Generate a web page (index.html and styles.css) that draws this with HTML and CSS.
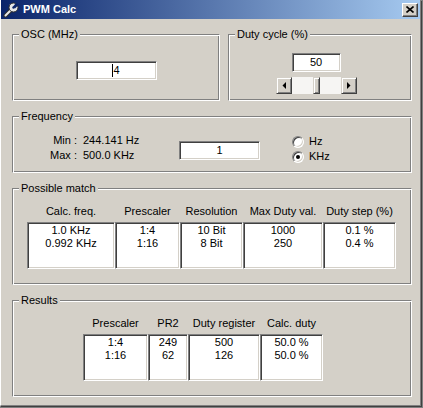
FILE: index.html
```html
<!DOCTYPE html>
<html>
<head>
<meta charset="utf-8">
<title>PWM Calc</title>
<link rel="stylesheet" href="styles.css">
</head>
<body>
<div class="window">
  <div class="titlebar">
    <svg class="app-icon" viewBox="0 0 16 16" width="16" height="16">
      <line x1="8.5" y1="7.5" x2="2.5" y2="13.5" stroke="#303030" stroke-width="4" stroke-linecap="round"/>
      <line x1="8.5" y1="7.5" x2="2.5" y2="13.5" stroke="#e8e8e8" stroke-width="2" stroke-linecap="round"/>
      <circle cx="10.5" cy="5.5" r="4.5" fill="#e8e8e8" stroke="#303030" stroke-width="1"/>
      <polygon points="10,4.5 13,1 16,2.5 12,6.5" fill="#0a246a"/>
      <circle cx="10.5" cy="5.5" r="1.2" fill="#0a246a"/>
    </svg>
    <span class="title">PWM Calc</span>
    <div class="close-btn">
      <svg viewBox="0 0 8 7" width="8" height="7">
        <path d="M0.5 0.5 L7.5 6.5 M7.5 0.5 L0.5 6.5" stroke="#000" stroke-width="1.6" fill="none"/>
      </svg>
    </div>
  </div>
  <div class="content">
    <div class="row">
      <div class="group group-osc">
        <span class="legend">OSC (MHz)</span>
        <div class="edit edit-osc"><span class="caret"></span>4</div>
      </div>
      <div class="group group-duty">
        <span class="legend">Duty cycle (%)</span>
        <div class="edit edit-duty">50</div>
        <div class="hscroll">
          <div class="raised sb-btn">
            <svg viewBox="0 0 4 7" width="4" height="7"><polygon points="4,0 4,7 0.5,3.5" fill="#000"/></svg>
          </div>
          <div class="sb-track"><div class="raised sb-thumb"></div></div>
          <div class="raised sb-btn">
            <svg viewBox="0 0 4 7" width="4" height="7"><polygon points="0,0 0,7 3.5,3.5" fill="#000"/></svg>
          </div>
        </div>
      </div>
    </div>

    <div class="group group-freq">
      <span class="legend">Frequency</span>
      <div class="freq-range">
        <span class="range-label">Min :</span><span>244.141 Hz</span>
        <span class="range-label">Max :</span><span>500.0 KHz</span>
      </div>
      <div class="edit edit-freq">1</div>
      <div class="units">
        <div class="radio-row"><span class="radio"></span><span>Hz</span></div>
        <div class="radio-row"><span class="radio checked"></span><span>KHz</span></div>
      </div>
    </div>

    <div class="group group-match">
      <span class="legend">Possible match</span>
      <div class="table table-match">
        <div class="th">Calc. freq.</div>
        <div class="th">Prescaler</div>
        <div class="th">Resolution</div>
        <div class="th">Max Duty val.</div>
        <div class="th">Duty step (%)</div>
        <div class="cell">1.0 KHz<br>0.992 KHz</div>
        <div class="cell">1:4<br>1:16</div>
        <div class="cell">10 Bit<br>8 Bit</div>
        <div class="cell">1000<br>250</div>
        <div class="cell">0.1 %<br>0.4 %</div>
      </div>
    </div>

    <div class="group group-results">
      <span class="legend">Results</span>
      <div class="table table-results">
        <div class="th">Prescaler</div>
        <div class="th">PR2</div>
        <div class="th">Duty register</div>
        <div class="th">Calc. duty</div>
        <div class="cell">1:4<br>1:16</div>
        <div class="cell">249<br>62</div>
        <div class="cell">500<br>126</div>
        <div class="cell">50.0 %<br>50.0 %</div>
      </div>
    </div>
  </div>
</div>
</body>
</html>
```

FILE: styles.css
```css
* { box-sizing: border-box; }

html, body {
  margin: 0;
  padding: 0;
}

body {
  width: 423px;
  height: 408px;
  overflow: hidden;
  background: #808080;
  font-family: "Liberation Sans", Arial, sans-serif;
  font-size: 11px;
  line-height: 13px;
  color: #000;
}

.window {
  width: 421px;
  height: 406px;
  background: #d4d0c8;
  border-left: 1px solid #fff;
  border-right: 1px solid #808080;
  border-bottom: 1px solid #808080;
  box-shadow: 1px 1px 0 #404040;
  display: flex;
  flex-direction: column;
}

.titlebar {
  height: 19px;
  flex: none;
  background: linear-gradient(to right, #0a246a, #a6caf0);
  display: flex;
  align-items: center;
  padding: 0 2px 0 2px;
  color: #fff;
}

.app-icon {
  flex: none;
  margin-right: 4px;
}

.title {
  font-weight: bold;
  font-size: 11px;
}

.close-btn {
  margin-left: auto;
  width: 16px;
  height: 14px;
  background: #d4d0c8;
  border: 1px solid;
  border-color: #fff #404040 #404040 #fff;
  box-shadow: inset -1px -1px #808080;
  display: flex;
  align-items: center;
  justify-content: center;
}

.content {
  padding: 15px 0 0 11px;
  display: flex;
  flex-direction: column;
  gap: 15px;
}

.row {
  display: flex;
  gap: 8px;
}

.group {
  position: relative;
  border: 1px solid;
  border-color: #808080 #fff #fff #808080;
  box-shadow: inset 1px 1px #fff, inset -1px -1px #808080;
}

.legend {
  position: absolute;
  top: -7px;
  left: 6px;
  padding: 0 2px;
  background: #d4d0c8;
  line-height: 13px;
  white-space: nowrap;
}

.edit {
  background: #fff;
  border: 1px solid;
  border-color: #808080 #fff #fff #808080;
  box-shadow: inset 1px 1px #404040, inset -1px -1px #d4d0c8;
  height: 19px;
  display: flex;
  align-items: center;
  justify-content: center;
}

.caret {
  display: inline-block;
  width: 1px;
  height: 13px;
  background: #000;
}

.raised {
  background: #d4d0c8;
  border: 1px solid;
  border-color: #d4d0c8 #404040 #404040 #d4d0c8;
  box-shadow: inset 1px 1px #fff, inset -1px -1px #808080;
}

/* OSC */
.group-osc {
  width: 208px;
  height: 67px;
  display: flex;
  justify-content: center;
  align-items: flex-start;
  padding-top: 26px;
}

.edit-osc { width: 81px; }

/* Duty cycle */
.group-duty {
  width: 184px;
  height: 67px;
  display: flex;
  flex-direction: column;
  align-items: center;
  padding: 18px 8px 0 0;
}

.edit-duty { width: 49px; }

.hscroll {
  margin-top: 5px;
  display: flex;
  width: 81px;
  height: 17px;
}

.sb-btn {
  width: 16px;
  height: 17px;
  display: flex;
  align-items: center;
  justify-content: center;
}

.sb-track {
  flex: 1;
  display: flex;
  justify-content: center;
  background: #f6f5f3;
}

.sb-thumb {
  width: 7px;
  height: 17px;
}

/* Frequency */
.group-freq {
  width: 400px;
  height: 57px;
  display: flex;
  align-items: flex-start;
  padding-top: 16px;
}

.freq-range {
  display: grid;
  grid-template-columns: 40px 90px;
  column-gap: 6px;
  line-height: 15px;
  margin-left: 24px;
}

.range-label { text-align: right; }

.edit-freq {
  width: 81px;
  margin-top: 8px;
  margin-left: 6px;
}

.units {
  margin-left: 32px;
  margin-top: 1px;
}

.radio-row {
  display: flex;
  align-items: center;
  gap: 5px;
  height: 15px;
}

.radio {
  position: relative;
  width: 12px;
  height: 12px;
  border-radius: 50%;
  background: #fff;
  border: 1px solid;
  border-color: #808080 #fff #fff #808080;
  box-shadow: inset 1px 1px #404040, inset -1px -1px #d4d0c8;
}

.radio.checked::after {
  content: "";
  position: absolute;
  left: 3px;
  top: 3px;
  width: 4px;
  height: 4px;
  border-radius: 50%;
  background: #000;
}

/* Tables */
.group-match,
.group-results {
  width: 400px;
  height: 97px;
  padding-top: 16px;
}

.group-match { padding-left: 14px; }
.group-results { padding-left: 70px; }

.table {
  display: grid;
  row-gap: 4px;
}

.table-match { grid-template-columns: 88px 65px 63px 80px 73px; }
.table-results { grid-template-columns: 65px 40px 72px 63px; }

.th {
  text-align: center;
  white-space: nowrap;
  line-height: 13px;
}

.cell {
  height: 47px;
  background: #fff;
  border: 1px solid;
  border-color: #808080 #fff #fff #808080;
  box-shadow: inset 1px 1px #404040, inset -1px -1px #d4d0c8;
  text-align: center;
  line-height: 13px;
  padding-top: 1px;
  white-space: nowrap;
}
```
